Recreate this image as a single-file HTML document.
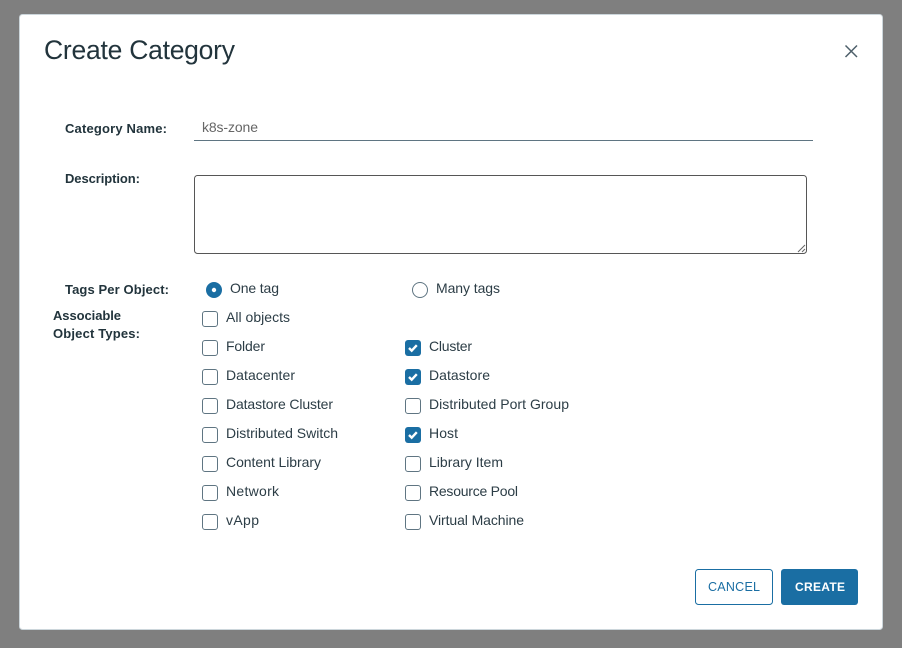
<!DOCTYPE html>
<html>
<head>
<meta charset="utf-8">
<title>Create Category</title>
<style>
html,body{margin:0;padding:0;width:902px;height:648px;overflow:hidden;background:#7f7f7f}
svg{display:block}
text{font-family:"Liberation Sans",sans-serif;font-size:14px;fill:#2c3d46}
.b{font-size:13px;font-weight:bold;fill:#22343c}
.cb{fill:#fff;stroke:#5f7582;stroke-width:1}
.ck{fill:#1a6ea3}
.m{fill:none;stroke:#fff;stroke-width:2.4}
</style>
</head>
<body>
<svg width="902" height="648" viewBox="0 0 902 648" xmlns="http://www.w3.org/2000/svg">
<rect width="902" height="648" fill="#7f7f7f"/>
<rect x="19.5" y="14.5" width="863" height="615" rx="3" fill="#fff" stroke="#ccd6db"/>

<text x="44" y="59" style="font-size:26.5px;fill:#22343c" textLength="191">Create Category</text>
<path d="M845.5 45.5L857 57M857 45.5L845.5 57" fill="none" stroke="#4d5f69" stroke-width="1.5"/>

<text class="b" x="65" y="133" textLength="102">Category Name:</text>
<text x="202" y="132" textLength="56" style="fill:#666">k8s-zone</text>
<rect x="194" y="140" width="619" height="1" fill="#5f7582"/>

<text class="b" x="65" y="183" textLength="75">Description:</text>
<rect x="194.5" y="175.5" width="612" height="78" rx="3" fill="#fff" stroke="#565656"/>
<path d="M798 252L805 245M802 252L805 249" stroke="#666" stroke-width="1" fill="none"/>

<text class="b" x="65" y="294" textLength="104">Tags Per Object:</text>
<circle cx="214" cy="290" r="8" fill="#1a6ea3"/>
<circle cx="214" cy="290" r="2.2" fill="#fff"/>
<text x="230" y="293" textLength="49">One tag</text>
<circle cx="420" cy="290" r="7.5" fill="#fff" stroke="#5f7582"/>
<text x="436" y="293" textLength="64">Many tags</text>

<text class="b" x="53" y="320" textLength="68">Associable</text>
<text class="b" x="53" y="338" textLength="87">Object Types:</text>

<rect class="cb" x="202.5" y="311.5" width="15" height="15" rx="2.5"/>
<text x="226" y="322" textLength="64">All objects</text>

<rect class="cb" x="202.5" y="340.5" width="15" height="15" rx="2.5"/>
<text x="226" y="351" textLength="39">Folder</text>
<rect class="cb" x="202.5" y="369.5" width="15" height="15" rx="2.5"/>
<text x="226" y="380" textLength="69">Datacenter</text>
<rect class="cb" x="202.5" y="398.5" width="15" height="15" rx="2.5"/>
<text x="226" y="409" textLength="107">Datastore Cluster</text>
<rect class="cb" x="202.5" y="427.5" width="15" height="15" rx="2.5"/>
<text x="226" y="438" textLength="112">Distributed Switch</text>
<rect class="cb" x="202.5" y="456.5" width="15" height="15" rx="2.5"/>
<text x="226" y="467" textLength="95">Content Library</text>
<rect class="cb" x="202.5" y="485.5" width="15" height="15" rx="2.5"/>
<text x="226" y="496" textLength="53">Network</text>
<rect class="cb" x="202.5" y="514.5" width="15" height="15" rx="2.5"/>
<text x="226" y="525" textLength="33">vApp</text>

<rect class="ck" x="405" y="340" width="16" height="16" rx="3"/>
<path class="m" d="M409 348L411.7 350.7L416.8 345.2"/>
<text x="429" y="351" textLength="43">Cluster</text>
<rect class="ck" x="405" y="369" width="16" height="16" rx="3"/>
<path class="m" d="M409 377L411.7 379.7L416.8 374.2"/>
<text x="429" y="380" textLength="61">Datastore</text>
<rect class="cb" x="405.5" y="398.5" width="15" height="15" rx="2.5"/>
<text x="429" y="409" textLength="140">Distributed Port Group</text>
<rect class="ck" x="405" y="427" width="16" height="16" rx="3"/>
<path class="m" d="M409 435L411.7 437.7L416.8 432.2"/>
<text x="429" y="438" textLength="29">Host</text>
<rect class="cb" x="405.5" y="456.5" width="15" height="15" rx="2.5"/>
<text x="429" y="467" textLength="74">Library Item</text>
<rect class="cb" x="405.5" y="485.5" width="15" height="15" rx="2.5"/>
<text x="429" y="496" textLength="89">Resource Pool</text>
<rect class="cb" x="405.5" y="514.5" width="15" height="15" rx="2.5"/>
<text x="429" y="525" textLength="95">Virtual Machine</text>

<rect x="695.5" y="569.5" width="77" height="35" rx="3" fill="#fff" stroke="#1a6ea3"/>
<text x="708" y="591" textLength="52" style="font-size:12.5px;fill:#1a6ea3">CANCEL</text>
<rect x="781" y="569" width="77" height="36" rx="3" fill="#1a6ea3"/>
<text x="795" y="591" textLength="50" style="font-size:12px;fill:#fff;font-weight:bold">CREATE</text>
</svg>
</body>
</html>
